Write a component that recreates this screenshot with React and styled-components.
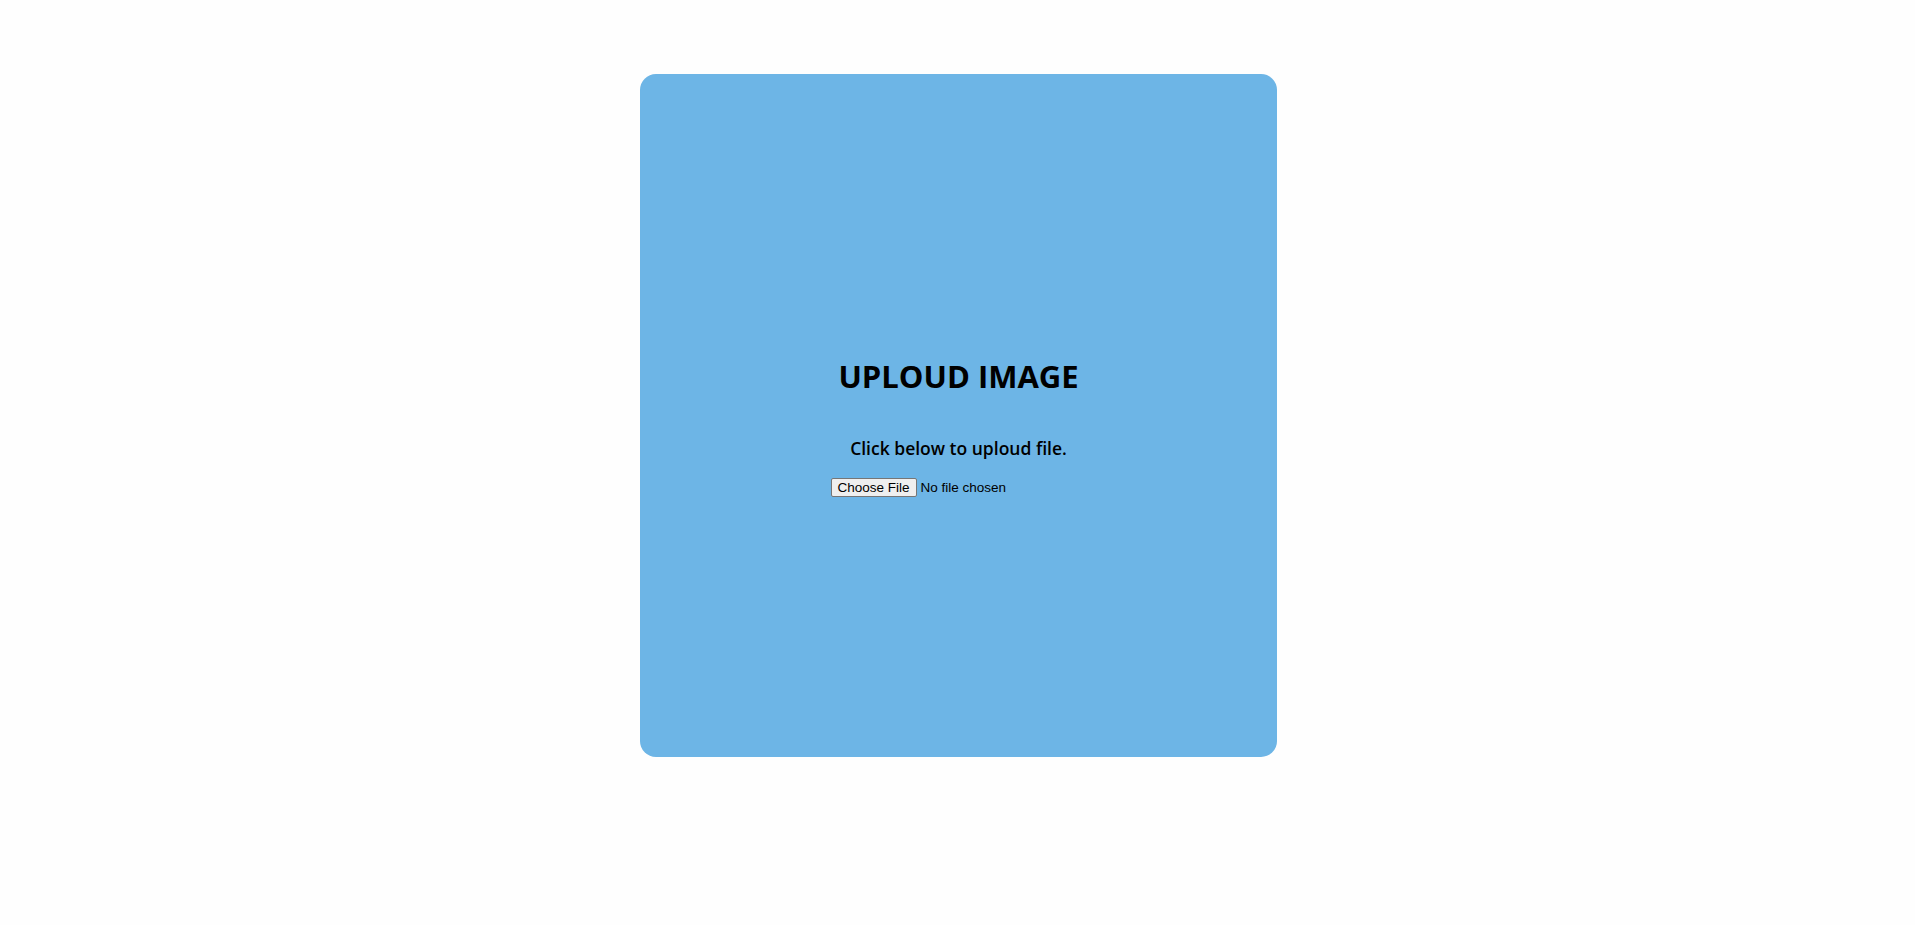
import React from "react";
import styled, { createGlobalStyle } from "styled-components";

const GlobalStyle = createGlobalStyle`
  body {
    margin: 0;
    background: #fefefe;
    font-family: "Open Sans", "Noto Sans", sans-serif;
  }
`;

const Page = styled.div`
  display: flex;
  justify-content: center;
  padding: 74px 0 0 2px;
`;

const Card = styled.div`
  box-sizing: border-box;
  width: 637px;
  height: 683px;
  padding-top: 19px;
  background: #6db5e6;
  border-radius: 16px;
  display: flex;
  flex-direction: column;
  align-items: center;
  justify-content: center;
`;

const Title = styled.h1`
  margin: 0 0 37px;
  font-size: 31px;
  line-height: 44px;
  font-weight: 700;
  color: #000;
`;

const Hint = styled.h3`
  margin: 0 0 17px;
  font-size: 17.5px;
  line-height: 26px;
  font-weight: 600;
  color: #000;
`;

const FileInput = styled.input`
  font-family: "Liberation Sans", Arial, sans-serif;
  font-size: 13.5px;
  color: #000;
  &::file-selector-button {
    font-family: "Liberation Sans", Arial, sans-serif;
    font-size: 13.5px;
    padding: 1px 6px;
    margin-right: 4px;
    background: #efefef;
    border: 1px solid #767676;
    border-radius: 2px;
    color: #000;
  }
`;

const App = () => {
  return (
    <>
      <GlobalStyle />
      <Page>
        <Card>
          <Title>UPLOUD IMAGE</Title>
          <Hint>Click below to uploud file.</Hint>
          <FileInput type="file" />
        </Card>
      </Page>
    </>
  );
};

export default App;
